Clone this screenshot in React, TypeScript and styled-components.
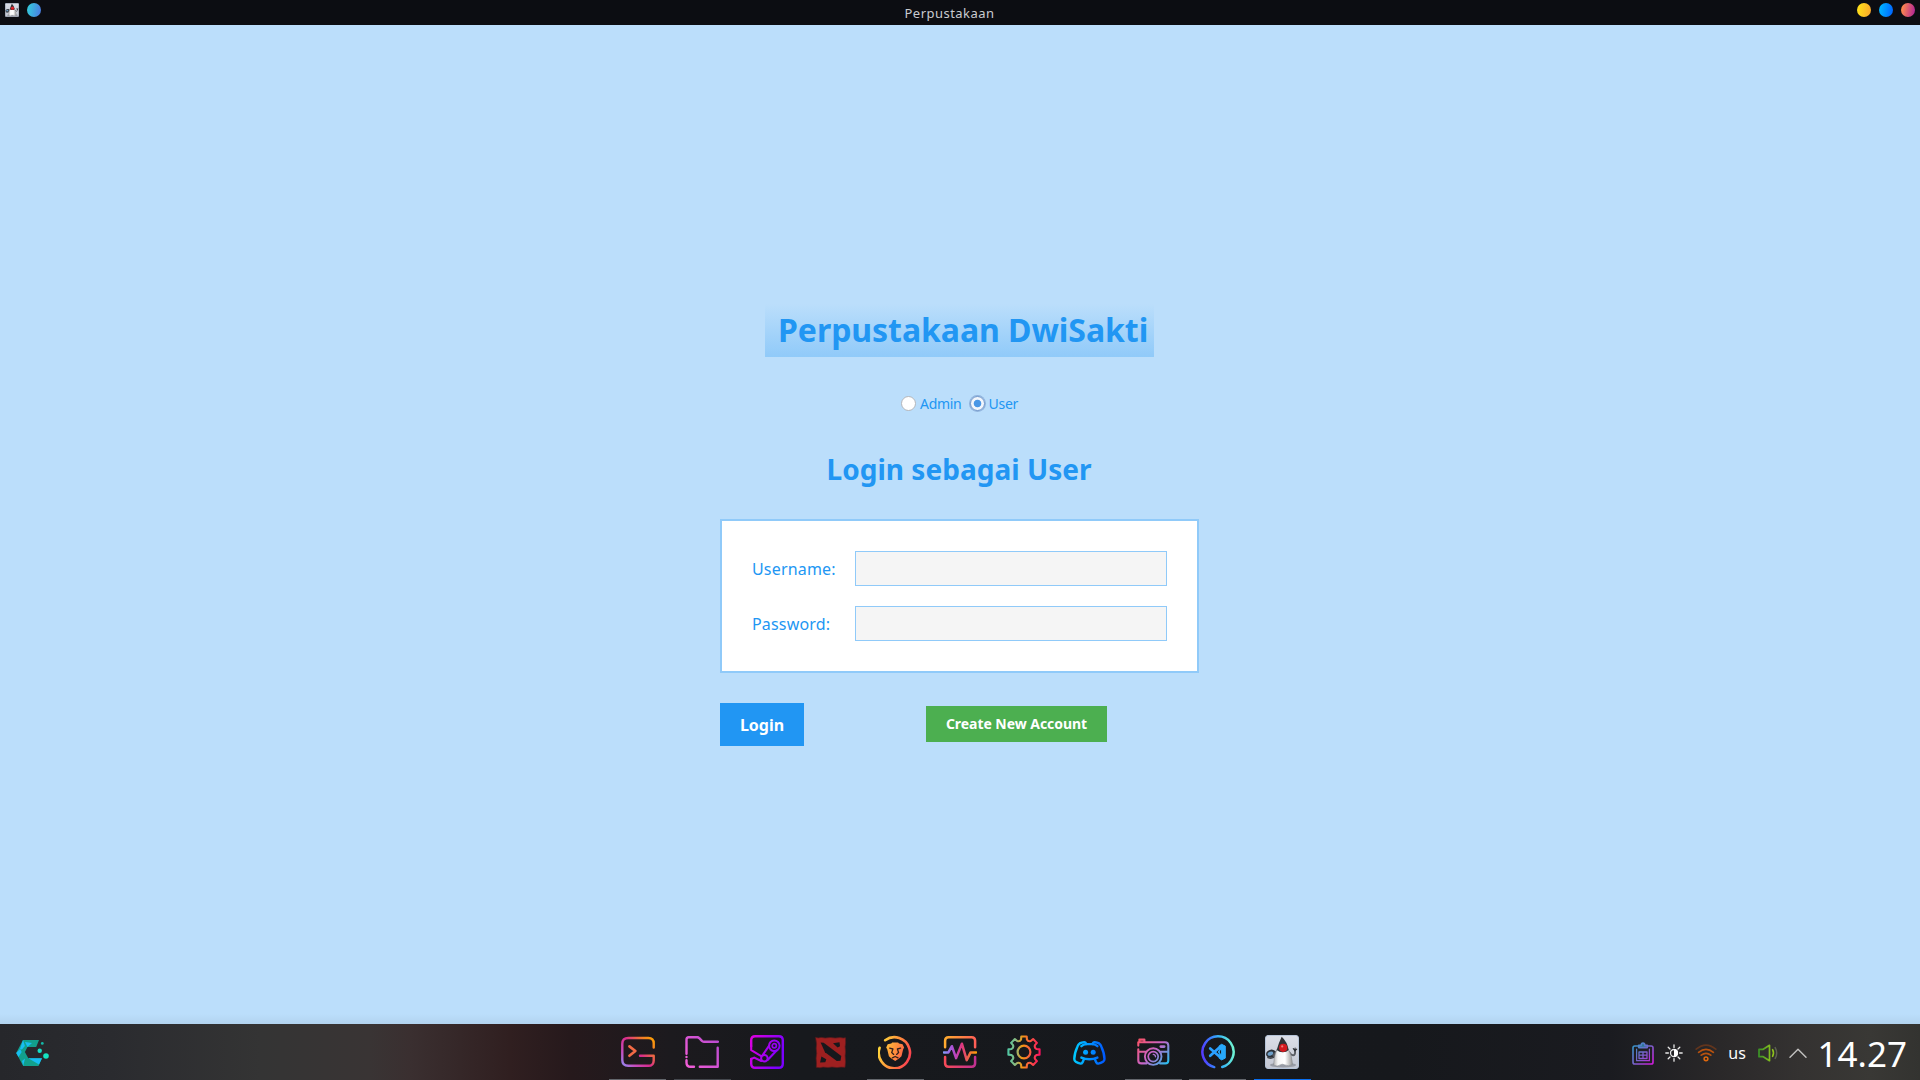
import React from "react";
import styled, { createGlobalStyle } from "styled-components";

const GlobalStyle = createGlobalStyle`
  * { box-sizing: border-box; }
  body { margin: 0; overflow: hidden; }
  svg { display: block; flex: none; }
`;

const FONT = `"Noto Sans", "Open Sans", sans-serif`;

const Screen = styled.div`
  width: 1920px;
  height: 1080px;
  display: flex;
  flex-direction: column;
  background: #bbdefb;
  font-family: ${FONT};
  color: #2196f3;
`;

/* ---------- window title bar ---------- */

const TitleBar = styled.header`
  height: 25px;
  flex: none;
  display: flex;
  align-items: flex-start;
  background: #0c0d12;
  padding: 3px 5px 0;
`;

const BarGroup = styled.div<{ $gap: number }>`
  display: flex;
  gap: ${(p) => p.$gap}px;
`;

const WindowTitle = styled.div`
  flex: 1;
  text-align: center;
  padding-left: 1px;
  margin-top: 1px;
  font-size: 13px;
  line-height: 18px;
  letter-spacing: 0.46px;
  color: #c9cbd0;
`;

const Dot = styled.span<{ $from: string; $to: string }>`
  width: 14px;
  height: 14px;
  border-radius: 50%;
  background: linear-gradient(100deg, ${(p) => p.$from} 10%, ${(p) => p.$to} 90%);
`;

/* ---------- login page ---------- */

const Page = styled.main`
  flex: 1;
  display: flex;
  flex-direction: column;
  align-items: center;
  padding-top: 279px;
  background: linear-gradient(to top, #b2d3ef 0, #bbdefb 10px);
`;

const Banner = styled.h1`
  margin: 0 0 0 -1px;
  width: 389px;
  height: 53px;
  padding-left: 13px;
  font-size: 32px;
  line-height: 51px;
  font-weight: 700;
  letter-spacing: -0.05px;
  white-space: nowrap;
  background: linear-gradient(#bbdefb, #90caf9);
`;

const Roles = styled.div`
  margin: 38px 0 0 -1px;
  display: flex;
  gap: 8px;
`;

const Role = styled.label`
  display: flex;
  align-items: center;
  gap: 4px;
  font-size: 14px;
  line-height: 17px;
  letter-spacing: -0.28px;
`;

const RadioMark = styled.span<{ $on?: boolean }>`
  width: 15px;
  height: 15px;
  border-radius: 50%;
  border: 1px solid ${(p) => (p.$on ? "#7396c8" : "#b4b6ba")};
  box-shadow: ${(p) => (p.$on ? "0 0 0 1px #8fb2dc" : "none")};
  background: ${(p) => (p.$on ? "radial-gradient(circle, #4a97e6 3.4px, #f2f6fc 4.2px)" : "#fff")};
`;

const Heading = styled.h2`
  margin: 38px 0 0 -2px;
  font-size: 28px;
  line-height: 38px;
  font-weight: 700;
  letter-spacing: 0.03px;
  white-space: nowrap;
`;

const Form = styled.form`
  width: 479px;
  margin: 31px 0 0 -1px;
`;

const Card = styled.div`
  height: 154px;
  border: 2px solid #90caf9;
  background: #fff;
  padding: 30px;
  display: grid;
  grid-template-columns: 103px 312px;
  grid-auto-rows: 35px;
  row-gap: 20px;
  align-items: center;
`;

const Label = styled.label`
  font-size: 16px;
  line-height: 22px;
  letter-spacing: 0.17px;
`;

const Field = styled.input`
  height: 35px;
  width: 100%;
  border: 1px solid #90caf9;
  border-radius: 0;
  background: #f5f5f5;
  padding: 0 8px;
  outline: none;
`;

const Actions = styled.div`
  display: flex;
  align-items: flex-start;
  margin-top: 30px;
  gap: 122px;
`;

const Button = styled.button<{ $color: string; $w: number; $h: number; $size: number; $top?: number; $lift?: number }>`
  width: ${(p) => p.$w}px;
  height: ${(p) => p.$h}px;
  margin: ${(p) => p.$top ?? 0}px 0 0;
  padding: 0 0 ${(p) => p.$lift ?? 0}px;
  border: 0;
  background: ${(p) => p.$color};
  color: #fff;
  font: 700 ${(p) => p.$size}px ${FONT};
  letter-spacing: ${(p) => (p.$size < 16 ? "-0.05px" : "0")};
  white-space: nowrap;
`;

/* ---------- desktop panel ---------- */

const Panel = styled.footer`
  height: 56px;
  flex: none;
  display: grid;
  grid-template-columns: 609.1px 702px 1fr;
  background: linear-gradient(
    90deg,
    #26272b 0,
    #2a2b2f 110px,
    #343434 260px,
    #393434 370px,
    #3a2f30 410px,
    #301f20 510px,
    #26191c 570px,
    #1c1a1e 670px,
    #17191d 800px,
    #16181c 1400px,
    #1a1b20 1610px,
    #2a2829 1720px,
    #343231 1800px,
    #393835 1870px,
    #333330 1920px
  );
`;

const Launcher = styled.div`
  padding: 16px 0 0 16px;
`;

const Tasks = styled.div`
  display: flex;
  gap: 7.46px;
`;

const Task = styled.div<{ $line: string }>`
  width: 57px;
  height: 56px;
  display: flex;
  justify-content: center;
  padding-top: 11px;
  border-bottom: 1px solid ${(p) => p.$line};
`;

const Tray = styled.div`
  display: flex;
  align-items: center;
  justify-content: flex-end;
  padding-right: 13px;
`;

const TrayItem = styled.div<{ $w: number }>`
  width: ${(p) => p.$w}px;
  flex: none;
  display: flex;
  justify-content: center;
  padding-top: 2px;
`;

const Layout = styled.span`
  font-size: 16px;
  line-height: 22px;
  margin-top: -1px;
  color: #fcfcfc;
`;

const Clock = styled.time`
  font-size: 35px;
  line-height: 50px;
  margin: 3px 0 0 5px;
  color: #fff;
  white-space: nowrap;
`;

type Stop = [string, string];

function Grad({ id, stops, v = [0, 0, 34, 34] }: { id: string; stops: Stop[]; v?: number[] }) {
  return (
    <linearGradient id={id} gradientUnits="userSpaceOnUse" x1={v[0]} y1={v[1]} x2={v[2]} y2={v[3]}>
      {stops.map(([o, c]) => (
        <stop key={o} offset={o} stopColor={c} />
      ))}
    </linearGradient>
  );
}

function Svg({ w = 34, h = 34, box, children }: { w?: number; h?: number; box?: string; children: React.ReactNode }) {
  return (
    <svg width={w} height={h} viewBox={box ?? `0 0 ${w} ${h}`} fill="none" strokeLinecap="round" strokeLinejoin="round">
      {children}
    </svg>
  );
}

const TerminalIcon = () => (
  <Svg>
    <Grad id="term" v={[0, 30, 32, 2]} stops={[["0", "#8f8cf5"], [".22", "#c550c0"], [".5", "#d92b8c"], [".78", "#f27a2c"], ["1", "#ffa400"]]} />
    <path d="M32.7 12.5V8.2q0-5.2-5.2-5.2H7.4Q1.3 3 1.3 9v16q0 5.8 6 5.8h20q5.4 0 5.4-5.4v-4.6H19" stroke="url(#term)" strokeWidth="2.4" />
    <path d="m8.4 11.4 6 4.6-6 4.8" stroke="#f26a45" strokeWidth="2.6" />
  </Svg>
);

const FolderIcon = () => (
  <Svg>
    <Grad id="fold" v={[34, 4, 0, 32]} stops={[["0", "#b94ad0"], ["1", "#f55fd8"]]} />
    <g stroke="url(#fold)" strokeWidth="2.4">
      <path d="M1.5 18.8V4.4Q1.5 2.2 3.7 2.2h8.6q1.2 0 2 1l2.4 2.5q.9 1 2.2 1h14" />
      <path d="M32.7 12.7v19.1H14.8M9 31.8H5.6q-4.1 0-4.1-4v-2.6M1.5 22v.1" />
    </g>
  </Svg>
);

const SteamIcon = () => (
  <Svg>
    <Grad id="steam" v={[2, 0, 34, 12]} stops={[["0", "#dc00df"], ["1", "#7b00ff"]]} />
    <g stroke="url(#steam)" strokeWidth="2.4">
      <path d="M1.2 11V5.2q0-4 4-4h23.6q4 0 4 4v23.6q0 4-4 4H5.2q-4 0-4-4V24" />
      <path d="M1.2 11v4.2l9.6 5.6M1.2 24l3-1.4 7 3.4M19.2 10.5l-6.5 9.6M26.6 15.6l-9 9.4" strokeWidth="2.1" />
      <circle cx="24.3" cy="10.8" r="5.3" strokeWidth="2" />
      <circle cx="24.3" cy="10.8" r="2.1" strokeWidth="1.7" />
      <circle cx="14.4" cy="23.2" r="3.3" strokeWidth="2" />
    </g>
  </Svg>
);

const DotaIcon = () => (
  <Svg>
    <path
      d="m1.8 2.5 2.4.5 3-.6 4 .7 5-.6 5 .6 5-.5 3 .5 2.3-.3.1 5-.5 4 .4 5-.4 4 .4 6-.5 5.5-4-.2-4 .5-5-.6-4 .5-5-.4-3 .6-3.7-.4.2-4-.4-5 .6-5-.5-5 .4-4z"
      fill="#9e2020"
      stroke="#5c1a1c"
      strokeWidth=".7"
    />
    <path d="m6.6 7.4 3.1.3 17.6 13.4-.8 4.6-3.7.4L11 17.3z" fill="#17181c" />
    <path d="m19 8.3 6.5-1.1.5 4-2.4 1.3zM7.4 21.5l4.9 2.7-1 3.1-5.2.2z" fill="#17181c" />
  </Svg>
);

const BraveIcon = () => (
  <Svg>
    <Grad id="brave" v={[1, 10, 33, 22]} stops={[["0", "#ffdb3a"], [".5", "#ff8f3c"], ["1", "#fb3e50"]]} />
    <path d="M7.2 5.2A15.6 15.6 0 1 1 1.6 12.8" stroke="url(#brave)" strokeWidth="2.6" />
    <path
      d="m8.2 12.4 1.5-3.2 3.6-.7.9-1h5.9l.9 1 3.6.7 1.5 3.2-1 2-1.6 6.8-2.5 2.3-3.8 2.5-3.8-2.5-2.5-2.3-1.6-6.8z"
      fill="url(#brave)"
    />
    <path d="m11.7 13.2 3.2.8-1.2 3.6 2 1.8M22.6 13.2l-3.2.8 1.2 3.6-2 1.8M14.4 22.8l2.8-1.3 2.8 1.3" stroke="#33201c" strokeWidth="1.3" />
  </Svg>
);

const MonitorIcon = () => (
  <Svg>
    <Grad id="montop" v={[0, 2, 34, 8]} stops={[["0", "#ffb12c"], ["1", "#ff5a58"]]} />
    <Grad id="monbot" v={[0, 30, 34, 30]} stops={[["0", "#f94c55"], ["1", "#bd2f94"]]} />
    <Grad id="pulse" v={[0, 17, 34, 17.1]} stops={[["0", "#7fa0ff"], [".3", "#b04bd0"], [".55", "#dd3580"], ["1", "#ffa500"]]} />
    <path d="M2.1 12.2V5.7q0-3.5 3.5-3.5h23q3.5 0 3.5 3.5v6.5" stroke="url(#montop)" strokeWidth="2.5" />
    <path d="M2.1 22v6.3q0 3.5 3.5 3.5h23q3.5 0 3.5-3.5V22" stroke="url(#monbot)" strokeWidth="2.5" />
    <path d="M.9 17.4h4.5l3.5-6.2 4.2 11.9 5.8-14.4 4.8 16.4 3.9-7.7h5.5" stroke="url(#pulse)" strokeWidth="2.5" />
  </Svg>
);

/* Eight rounded teeth: flat tips joined by curved valleys. */
const gearPath = (() => {
  const at = (angle: number, r: number) =>
    `${(17 + r * Math.sin(angle)).toFixed(2)} ${(17 - r * Math.cos(angle)).toFixed(2)}`;
  let d = "";
  for (let i = 0; i < 8; i++) {
    const a = (i * Math.PI) / 4;
    d += `${i ? "L" : "M"}${at(a - 0.17, 15.8)}L${at(a + 0.17, 15.8)}L${at(a + 0.23, 12.9)}`;
    d += `Q${at(a + Math.PI / 8, 10.9)} ${at(a + Math.PI / 4 - 0.23, 12.9)}`;
  }
  return `${d}Z`;
})();

const GearIcon = () => (
  <Svg>
    <Grad id="gear" v={[1, 17, 33, 18]} stops={[["0", "#50c8a5"], [".25", "#8fb97c"], [".45", "#f5950f"], [".62", "#f96a38"], ["1", "#fb1060"]]} />
    <path d={gearPath} stroke="url(#gear)" strokeWidth="2.1" />
    <circle cx="17" cy="17" r="6.4" stroke="url(#gear)" strokeWidth="2.2" />
  </Svg>
);

const DiscordIcon = () => (
  <Svg>
    <Grad id="disc" v={[1, 17, 33, 18]} stops={[["0", "#00cfff"], ["1", "#0058ff"]]} />
    <g stroke="url(#disc)" strokeWidth="2.4">
      <path d="M9.4 11.2q2-1.8 4.8-2.1h6.4q2.8.3 4.8 2.1M9.4 22.6q8 3.4 16 0" />
      <path d="M14.2 9.1q-.4-2-2-2-2.6.2-4.5 1.3-1.5 1-2.3 3.3Q2.3 18.500 2.3 24q0 1.800 1.500 2.700 2.200 1.500 4.700 1.900 1.300.1 2-1.200l1.300-3" />
      <path d="M20.600 9.1q.4-2 2-2 2.600.2 4.500 1.300 1.500 1 2.300 3.300 3.100 6.800 3.100 12.300 0 1.800-1.500 2.700-2.200 1.500-4.700 1.900-1.300.1-2-1.200l-1.300-3" />
    </g>
    <g fill="url(#disc)">
      <circle cx="13.6" cy="17.2" r="2.5" />
      <circle cx="21.2" cy="17.2" r="2.5" />
    </g>
  </Svg>
);

const CameraIcon = () => (
  <Svg>
    <Grad id="cam" v={[3, 4, 31, 30]} stops={[["0", "#fb5368"], [".5", "#c864c8"], ["1", "#22c1f0"]]} />
    <g stroke="url(#cam)" strokeWidth="2.1">
      <path d="M3.4 7.2V4.6h5v2.6M2.3 10.6V7.3H29q3.3 0 3.3 3.3v14.8q0 3-3 3h-5.2M2.3 14.2v11.2q0 3 3 3h5.2M2.3 16.8h7.4M24.7 16.8h7.3" />
      <path d="M24.8 11.6h3.4" strokeWidth="2.6" />
      <circle cx="17.2" cy="21.6" r="8.3" strokeWidth="1.9" />
      <circle cx="17.2" cy="21.6" r="5" strokeWidth="1.7" />
      <path d="M17.2 19.4q2.2.2 2.3 2.4" strokeWidth="1.3" />
    </g>
  </Svg>
);

const CodeIcon = () => (
  <Svg>
    <Grad id="code" v={[1, 20, 33, 16]} stops={[["0", "#5638ff"], [".3", "#3a78ff"], [".6", "#35b6f5"], ["1", "#70f5d2"]]} />
    <path d="M13.2 32.1A15.6 15.6 0 1 1 21.2 32" stroke="url(#code)" strokeWidth="2.5" />
    <path d="M9.2 13.4l10 8.9M9.2 20.8l10-9" stroke="#2aa0ff" strokeWidth="2.7" />
    <path d="M18.6 10.6l2-1.3 3.7 1.8v12l-3.7 1.8-2-1.3zM20.6 14.2v5.8l-3.3-2.9z" fill="#28a9fb" fillRule="evenodd" stroke="#28a9fb" strokeWidth="1" />
  </Svg>
);

const DukeIcon = ({ size = 34, id = "duke" }: { size?: number; id?: string }) => (
  <Svg w={size} h={size} box="0 0 34 34">
    <Grad id={id} v={[0, 0, 0, 34]} stops={[["0", "#dcdfe8"], ["1", "#c3c7d2"]]} />
    <Grad id={`${id}b`} v={[8, 0, 28, 0]} stops={[["0", "#a8a8a8"], [".25", "#f6f6f6"], [".6", "#ffffff"], ["1", "#8d8d8d"]]} />
    <rect x=".5" y=".5" width="33" height="33" rx="2.5" fill={`url(#${id})`} stroke="#b6c4d8" />
    <ellipse cx="18" cy="30" rx="13" ry="2.600" fill="#989ca6" />
    <ellipse cx="6" cy="18.600" rx="5" ry="3.900" fill="#2b3037" transform="rotate(-18 6 18.600)" />
    <ellipse cx="5.400" cy="18.600" rx="3" ry="1.900" fill="#6fa0c8" transform="rotate(-18 5.400 18.600)" />
    <path d="M3 22.500q4.500 2 8.500-2.500" stroke="#43464c" strokeWidth="1.700" />
    <path d="M12.500 15.500 8.500 20.500" stroke="#55585e" strokeWidth="2.200" />
    <path d="M24 17q2.500 3.800 5 3.200 1.600-1 .9-5" stroke="#5b5e64" strokeWidth="1.900" />
    <path d="M29.900 15.600l-1.600-2M29.900 15.600l.2-2.600M30 15.800l1.700-1.600" stroke="#2c2f34" strokeWidth="1.100" />
    <path d="M12 14.500Q9.200 20 8.600 30q3.600 2.200 7-.3 1.700-1 3.600 0 4.700 2.200 8.300-.2-.2-8.500-3.900-14.800z" fill={`url(#${id}b)`} stroke="#85888e" strokeWidth=".5" />
    <path d="M16.700 1.800Q13.600 8 11.700 15q2.800 2.400 6.300 2.200 3.600 0 5.700-2.200Q22.200 6.800 16.700 1.800z" fill="#303236" />
    <circle cx="18.200" cy="12.800" r="4.100" fill="#d4191f" />
    <circle cx="17.200" cy="11.400" r="1.100" fill="#f27a78" />
  </Svg>
);

const LauncherIcon = () => (
  <Svg w={34} h={26}>
    <path d="M7 0h16l-2.8 7h-8.7l-2.6 5 3.4 6.2H26L22.5 26H7.2L.2 13z" fill="#12a08c" />
    <path d="M7 0l1.9 6-3 3.5L4 9zM9 2l7 1-4.5 4zM.2 13l3.9-4 1.6 3-3.2 5zM12.3 18.2H26L23 24.6zM6 21l3-2.500-1.800 7.500z" fill="#17bdf2" />
    <circle cx="26.3" cy="3.4" r="1.4" fill="#13b8a8" />
    <circle cx="23.7" cy="10.7" r="2.2" fill="#14e0c8" />
    <circle cx="30" cy="16" r="2.8" fill="#14e5c3" />
  </Svg>
);

const ClipboardIcon = () => (
  <Svg w={22} h={23}>
    <Grad id="clip" v={[2, 4, 20, 21]} stops={[["0", "#3a92c8"], [".5", "#7a62cc"], ["1", "#cb1edb"]]} />
    <g stroke="url(#clip)" strokeWidth="1.6">
      <path d="M6.5 4H2.8Q1 4 1 5.8v14.4Q1 22 2.8 22h16.4q1.8 0 1.8-1.8V5.8Q21 4 19.2 4h-3.7" />
      <path d="M6.7 5.6V3.4h2.4Q9.3 1 11 1t1.9 2.4h2.4v2.2z" fill="#2d7795" />
      <path d="M4.6 7v11.7h12.8V7" strokeWidth="1.2" />
      <path d="M7 10h8v6.5H7zM7 13.2h8M11 10v6.5" strokeWidth="1.3" />
    </g>
  </Svg>
);

const BrightnessIcon = () => (
  <Svg w={18} h={18}>
    <g stroke="#e8e8e8" strokeWidth="1.3">
      <path d="M9 .8v2.6M9 14.6v2.6M.8 9h2.6M14.6 9h2.6M3.2 3.2l1.8 1.8M13 13l1.8 1.8M3.2 14.8 5 13M13 5l1.8-1.8" />
      <circle cx="9" cy="9" r="3.5" />
    </g>
    <path d="M9 5a4 4 0 0 1 0 8z" fill="#fff" />
  </Svg>
);

const WifiIcon = () => (
  <Svg w={22} h={18}>
    <path d="M1.2 5.1q9.8-8 19.6 0" stroke="#62351d" strokeWidth="1.7" />
    <path d="M3.6 8.3q7.4-6 14.8 0M6.2 11.2q4.8-3.7 9.6 0" stroke="#b8520f" strokeWidth="1.7" />
    <circle cx="11" cy="14.8" r="1.9" stroke="#e0680c" strokeWidth="1.5" />
  </Svg>
);

const VolumeIcon = () => (
  <Svg w={20} h={18}>
    <Grad id="vol" v={[1, 9, 14, 9]} stops={[["0", "#3b9426"], ["1", "#8fc31c"]]} />
    <path d="M5.2 5.3H1v7.4h4.2l6.3 4V1.3z" stroke="url(#vol)" strokeWidth="1.7" />
    <path d="M14.6 5.7q1.8 3.3 0 6.6" stroke="#8fc31c" strokeWidth="1.6" />
    <path d="M17.2 3.6q3 5.4 0 10.8" stroke="#5d6152" strokeWidth="1.5" />
  </Svg>
);

const ChevronIcon = () => (
  <Svg w={18} h={10}>
    <path d="M1 9.2 9 1.2l8 8" stroke="#c4c3c2" strokeWidth="1.4" />
  </Svg>
);

const NONE = "transparent";
const OPEN = "#63666c";
const tasks = [
  { name: "terminal", Icon: TerminalIcon, line: OPEN },
  { name: "files", Icon: FolderIcon, line: "#45484e" },
  { name: "steam", Icon: SteamIcon, line: NONE },
  { name: "dota", Icon: DotaIcon, line: NONE },
  { name: "brave", Icon: BraveIcon, line: OPEN },
  { name: "monitor", Icon: MonitorIcon, line: NONE },
  { name: "settings", Icon: GearIcon, line: NONE },
  { name: "discord", Icon: DiscordIcon, line: NONE },
  { name: "camera", Icon: CameraIcon, line: OPEN },
  { name: "code", Icon: CodeIcon, line: OPEN },
  { name: "java", Icon: DukeIcon, line: "#0a6ff0" },
];

export default function App() {
  return (
    <Screen>
      <GlobalStyle />
      <TitleBar>
        <BarGroup $gap={8}>
          <DukeIcon size={14} id="dukeSmall" />
          <Dot $from="#35c8dc" $to="#4a7fe0" />
        </BarGroup>
        <WindowTitle>Perpustakaan</WindowTitle>
        <BarGroup $gap={8}>
          <Dot $from="#ffe01a" $to="#fbab2a" />
          <Dot $from="#00b4ff" $to="#0068ff" />
          <Dot $from="#ff8a4c" $to="#b52a92" />
        </BarGroup>
      </TitleBar>

      <Page>
        <Banner>Perpustakaan DwiSakti</Banner>
        <Roles>
          <Role>
            <RadioMark />
            Admin
          </Role>
          <Role>
            <RadioMark $on />
            User
          </Role>
        </Roles>
        <Heading>Login sebagai User</Heading>
        <Form>
          <Card>
            <Label htmlFor="username">Username:</Label>
            <Field id="username" />
            <Label htmlFor="password">Password:</Label>
            <Field id="password" type="password" />
          </Card>
          <Actions>
            <Button type="button" $color="#2196f3" $w={84} $h={43} $size={16}>
              Login
            </Button>
            <Button type="button" $color="#4caf50" $w={181} $h={36} $size={14} $top={3} $lift={2}>
              Create New Account
            </Button>
          </Actions>
        </Form>
      </Page>

      <Panel>
        <Launcher>
          <LauncherIcon />
        </Launcher>
        <Tasks>
          {tasks.map(({ name, Icon, line }) => (
            <Task key={name} $line={line}>
              <Icon />
            </Task>
          ))}
        </Tasks>
        <Tray>
          <TrayItem $w={32}><ClipboardIcon /></TrayItem>
          <TrayItem $w={31}><BrightnessIcon /></TrayItem>
          <TrayItem $w={32}><WifiIcon /></TrayItem>
          <TrayItem $w={31}><Layout>us</Layout></TrayItem>
          <TrayItem $w={31}><VolumeIcon /></TrayItem>
          <TrayItem $w={29}><ChevronIcon /></TrayItem>
          <Clock>14.27</Clock>
        </Tray>
      </Panel>
    </Screen>
  );
}
